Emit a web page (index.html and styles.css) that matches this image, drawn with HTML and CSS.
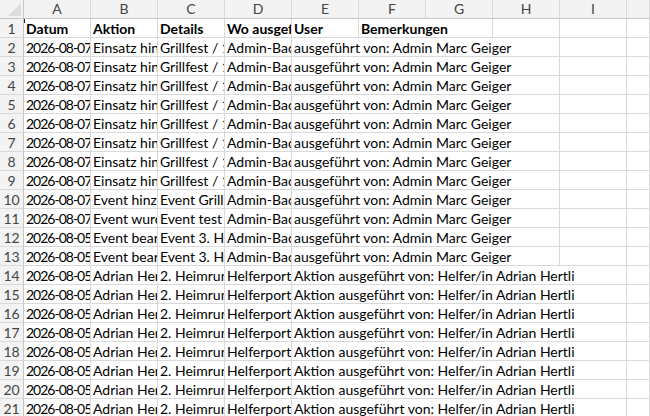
FILE: index.html
```html
<!DOCTYPE html>
<html lang="de">
<head>
    <meta charset="UTF-8">
    <title>Protokoll</title>
    <link rel="stylesheet" href="styles.css">
</head>
<body>
    <div class="blatt">
        <!-- Spaltenköpfe -->
        <div class="ecke"><span class="dreieck"></span></div>
        <div class="kopf">A</div>
        <div class="kopf">B</div>
        <div class="kopf">C</div>
        <div class="kopf">D</div>
        <div class="kopf">E</div>
        <div class="kopf">F</div>
        <div class="kopf">G</div>
        <div class="kopf">H</div>
        <div class="kopf">I</div>
        <div class="kopf"></div>

        <div class="nr">1</div>
        <div class="zelle fett aktiv">Datum</div>
        <div class="zelle fett">Aktion</div>
        <div class="zelle fett">Details</div>
        <div class="zelle fett">Wo ausgeführt</div>
        <div class="zelle fett">User</div>
        <div class="zelle fett breit2">Bemerkungen</div>
        <div class="zelle"></div>
        <div class="zelle"></div>
        <div class="zelle"></div>

        <div class="nr">2</div>
        <div class="zelle datum">2026-08-07 14:32</div>
        <div class="zelle">Einsatz hinzugefügt</div>
        <div class="zelle">Grillfest / 12:00</div>
        <div class="zelle">Admin-Backend</div>
        <div class="zelle breit4">ausgeführt von: Admin Marc Geiger</div>
        <div class="zelle"></div>
        <div class="zelle"></div>

        <div class="nr">3</div>
        <div class="zelle datum">2026-08-07 14:31</div>
        <div class="zelle">Einsatz hinzugefügt</div>
        <div class="zelle">Grillfest / 12:00</div>
        <div class="zelle">Admin-Backend</div>
        <div class="zelle breit4">ausgeführt von: Admin Marc Geiger</div>
        <div class="zelle"></div>
        <div class="zelle"></div>

        <div class="nr">4</div>
        <div class="zelle datum">2026-08-07 14:30</div>
        <div class="zelle">Einsatz hinzugefügt</div>
        <div class="zelle">Grillfest / 12:00</div>
        <div class="zelle">Admin-Backend</div>
        <div class="zelle breit4">ausgeführt von: Admin Marc Geiger</div>
        <div class="zelle"></div>
        <div class="zelle"></div>

        <div class="nr">5</div>
        <div class="zelle datum">2026-08-07 14:29</div>
        <div class="zelle">Einsatz hinzugefügt</div>
        <div class="zelle">Grillfest / 12:00</div>
        <div class="zelle">Admin-Backend</div>
        <div class="zelle breit4">ausgeführt von: Admin Marc Geiger</div>
        <div class="zelle"></div>
        <div class="zelle"></div>

        <div class="nr">6</div>
        <div class="zelle datum">2026-08-07 14:28</div>
        <div class="zelle">Einsatz hinzugefügt</div>
        <div class="zelle">Grillfest / 10:00</div>
        <div class="zelle">Admin-Backend</div>
        <div class="zelle breit4">ausgeführt von: Admin Marc Geiger</div>
        <div class="zelle"></div>
        <div class="zelle"></div>

        <div class="nr">7</div>
        <div class="zelle datum">2026-08-07 14:27</div>
        <div class="zelle">Einsatz hinzugefügt</div>
        <div class="zelle">Grillfest / 10:00</div>
        <div class="zelle">Admin-Backend</div>
        <div class="zelle breit4">ausgeführt von: Admin Marc Geiger</div>
        <div class="zelle"></div>
        <div class="zelle"></div>

        <div class="nr">8</div>
        <div class="zelle datum">2026-08-07 14:26</div>
        <div class="zelle">Einsatz hinzugefügt</div>
        <div class="zelle">Grillfest / 10:00</div>
        <div class="zelle">Admin-Backend</div>
        <div class="zelle breit4">ausgeführt von: Admin Marc Geiger</div>
        <div class="zelle"></div>
        <div class="zelle"></div>

        <div class="nr">9</div>
        <div class="zelle datum">2026-08-07 14:25</div>
        <div class="zelle">Einsatz hinzugefügt</div>
        <div class="zelle">Grillfest / 10:00</div>
        <div class="zelle">Admin-Backend</div>
        <div class="zelle breit4">ausgeführt von: Admin Marc Geiger</div>
        <div class="zelle"></div>
        <div class="zelle"></div>

        <div class="nr">10</div>
        <div class="zelle datum">2026-08-07 14:20</div>
        <div class="zelle">Event hinzugefügt</div>
        <div class="zelle">Event Grillfest</div>
        <div class="zelle">Admin-Backend</div>
        <div class="zelle breit4">ausgeführt von: Admin Marc Geiger</div>
        <div class="zelle"></div>
        <div class="zelle"></div>

        <div class="nr">11</div>
        <div class="zelle datum">2026-08-07 14:02</div>
        <div class="zelle">Event wurde gelöscht</div>
        <div class="zelle">Event test</div>
        <div class="zelle">Admin-Backend</div>
        <div class="zelle breit4">ausgeführt von: Admin Marc Geiger</div>
        <div class="zelle"></div>
        <div class="zelle"></div>

        <div class="nr">12</div>
        <div class="zelle datum">2026-08-05 19:41</div>
        <div class="zelle">Event bearbeitet</div>
        <div class="zelle">Event 3. Heimrunde</div>
        <div class="zelle">Admin-Backend</div>
        <div class="zelle breit4">ausgeführt von: Admin Marc Geiger</div>
        <div class="zelle"></div>
        <div class="zelle"></div>

        <div class="nr">13</div>
        <div class="zelle datum">2026-08-05 19:40</div>
        <div class="zelle">Event bearbeitet</div>
        <div class="zelle">Event 3. Heimrunde</div>
        <div class="zelle">Admin-Backend</div>
        <div class="zelle breit4">ausgeführt von: Admin Marc Geiger</div>
        <div class="zelle"></div>
        <div class="zelle"></div>

        <div class="nr">14</div>
        <div class="zelle datum">2026-08-05 18:12</div>
        <div class="zelle">Adrian Hertli eingetragen</div>
        <div class="zelle">2. Heimrunde</div>
        <div class="zelle">Helferportal</div>
        <div class="zelle breit5">Aktion ausgeführt von: Helfer/in Adrian Hertli</div>
        <div class="zelle"></div>

        <div class="nr">15</div>
        <div class="zelle datum">2026-08-05 18:11</div>
        <div class="zelle">Adrian Hertli eingetragen</div>
        <div class="zelle">2. Heimrunde</div>
        <div class="zelle">Helferportal</div>
        <div class="zelle breit5">Aktion ausgeführt von: Helfer/in Adrian Hertli</div>
        <div class="zelle"></div>

        <div class="nr">16</div>
        <div class="zelle datum">2026-08-05 18:10</div>
        <div class="zelle">Adrian Hertli eingetragen</div>
        <div class="zelle">2. Heimrunde</div>
        <div class="zelle">Helferportal</div>
        <div class="zelle breit5">Aktion ausgeführt von: Helfer/in Adrian Hertli</div>
        <div class="zelle"></div>

        <div class="nr">17</div>
        <div class="zelle datum">2026-08-05 18:09</div>
        <div class="zelle">Adrian Hertli eingetragen</div>
        <div class="zelle">2. Heimrunde</div>
        <div class="zelle">Helferportal</div>
        <div class="zelle breit5">Aktion ausgeführt von: Helfer/in Adrian Hertli</div>
        <div class="zelle"></div>

        <div class="nr">18</div>
        <div class="zelle datum">2026-08-05 18:08</div>
        <div class="zelle">Adrian Hertli eingetragen</div>
        <div class="zelle">2. Heimrunde</div>
        <div class="zelle">Helferportal</div>
        <div class="zelle breit5">Aktion ausgeführt von: Helfer/in Adrian Hertli</div>
        <div class="zelle"></div>

        <div class="nr">19</div>
        <div class="zelle datum">2026-08-05 18:07</div>
        <div class="zelle">Adrian Hertli eingetragen</div>
        <div class="zelle">2. Heimrunde</div>
        <div class="zelle">Helferportal</div>
        <div class="zelle breit5">Aktion ausgeführt von: Helfer/in Adrian Hertli</div>
        <div class="zelle"></div>

        <div class="nr">20</div>
        <div class="zelle datum">2026-08-05 18:06</div>
        <div class="zelle">Adrian Hertli eingetragen</div>
        <div class="zelle">2. Heimrunde</div>
        <div class="zelle">Helferportal</div>
        <div class="zelle breit5">Aktion ausgeführt von: Helfer/in Adrian Hertli</div>
        <div class="zelle"></div>

        <div class="nr">21</div>
        <div class="zelle datum">2026-08-05 18:05</div>
        <div class="zelle">Adrian Hertli eingetragen</div>
        <div class="zelle">2. Heimrunde</div>
        <div class="zelle">Helferportal</div>
        <div class="zelle breit5">Aktion ausgeführt von: Helfer/in Adrian Hertli</div>
        <div class="zelle"></div>
    </div>
</body>
</html>
```

FILE: styles.css
```css
body {
    margin: 0;
    background: #fff;
    overflow: hidden;
    font-family: Lato, "Open Sans", sans-serif;
}

.blatt {
    display: grid;
    grid-template-columns: 24px repeat(9, 67px) 1fr;
    grid-auto-rows: 19px;
    font-size: 14px;
    color: #000;
}

.blatt > div {
    box-sizing: border-box;
    border-right: 1px solid #d9d9d9;
    border-bottom: 1px solid #d9d9d9;
    white-space: nowrap;
    overflow: hidden;
}

.ecke {
    position: relative;
    background: #f3f3f3;
    border-right-color: #c6c6c6 !important;
    border-bottom-color: #c6c6c6 !important;
}

.dreieck {
    position: absolute;
    right: 2px;
    bottom: 2px;
    width: 0;
    height: 0;
    border-left: 13px solid transparent;
    border-bottom: 13px solid #dcdcdc;
}

.kopf {
    background: #f3f3f3;
    color: #444;
    text-align: center;
    line-height: 18px;
    border-bottom-color: #c6c6c6 !important;
}

.nr {
    background: #f3f3f3;
    color: #444;
    text-align: center;
    line-height: 19px;
    border-right-color: #c6c6c6 !important;
}

.zelle {
    padding: 0 2px;
    line-height: 19px;
    position: relative;
}

/* Ziffern etwas enger, damit das Datum fast ganz in die Spalte passt */
.datum {
    letter-spacing: -1px;
}

.fett {
    font-weight: bold;
}

/* kleiner Rest der Zellmarkierung oben links */
.aktiv::before {
    content: "";
    position: absolute;
    left: 0;
    top: 0;
    width: 1px;
    height: 4px;
    background: #222;
}

.breit2 { grid-column: span 2; }
.breit4 { grid-column: span 4; }
.breit5 { grid-column: span 5; }
```
